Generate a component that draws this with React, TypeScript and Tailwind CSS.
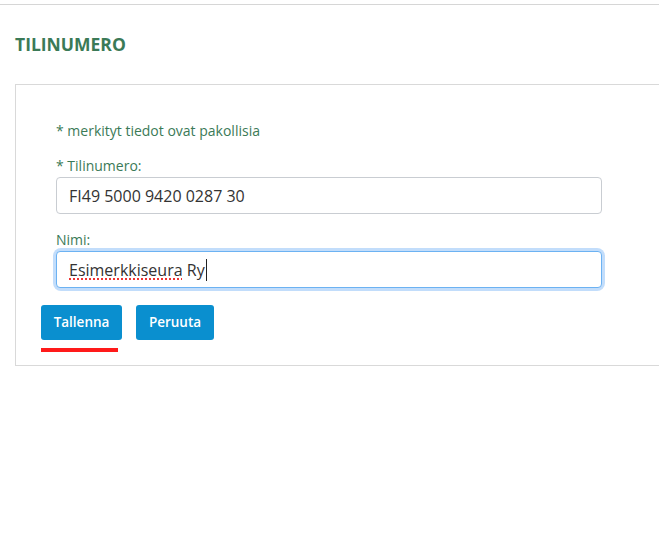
import React from 'react'

export default function App() {
  return (
    <div className="min-h-[539px] w-full overflow-hidden bg-white font-['Open_Sans',sans-serif]">
      <div className="h-[5px] border-b border-[#d6d6d6]" />

      <h1 className="ml-[15px] mt-[27px] text-[17.5px] font-bold uppercase leading-[24px] text-[#3b7a57]">
        Tilinumero
      </h1>

      <div className="ml-[15px] mt-[28px] w-[700px] border border-[#d9d9d9] pb-[13px]">
        <form className="pl-[40px] pt-[36px]" onSubmit={(e) => e.preventDefault()}>
          <p className="text-[14px] leading-[20px] text-[#3b7a57]">* merkityt tiedot ovat pakollisia</p>

          <label htmlFor="account" className="mt-[15px] block text-[14px] leading-[20px] text-[#3b7a57]">
            * Tilinumero:
          </label>
          <input
            id="account"
            defaultValue="FI49 5000 9420 0287 30"
            className="mt-[1px] block h-[37px] w-[546px] rounded-[4px] border border-[#c9cdd2] px-[12px] text-[16px] text-[#333] outline-none"
          />

          <label htmlFor="name" className="mt-[16px] block text-[14px] leading-[20px] text-[#3b7a57]">
            Nimi:
          </label>
          <div className="mt-[1px] w-[546px] rounded-[5px] shadow-[0_0_0_3px_#c2ddfb]">
            <div className="flex h-[37px] items-center rounded-[4px] border border-[#6cb2f2] px-[12px] text-[16px] text-[#333]">
              <span className="underline decoration-[#e33] decoration-dotted decoration-[1.5px] underline-offset-[3px]">
                Esimerkkiseura
              </span>
              <span>&nbsp;Ry</span>
              <span className="ml-[1px] h-[22px] w-[1px] bg-[#222]" />
            </div>
          </div>
        </form>

        <div className="ml-[25px] mt-[17px] flex gap-[14px]">
          <div className="flex flex-col">
            <button className="h-[35px] w-[81px] rounded-[3px] bg-[#0a8fcf] text-[13.5px] font-semibold text-white">
              Tallenna
            </button>
            <div className="mt-[8px] h-[4px] w-[77px] bg-[#ff1a1a]" />
          </div>
          <button className="h-[35px] w-[78px] rounded-[3px] bg-[#0a8fcf] text-[13.5px] font-semibold text-white">
            Peruuta
          </button>
        </div>
      </div>
    </div>
  )
}
